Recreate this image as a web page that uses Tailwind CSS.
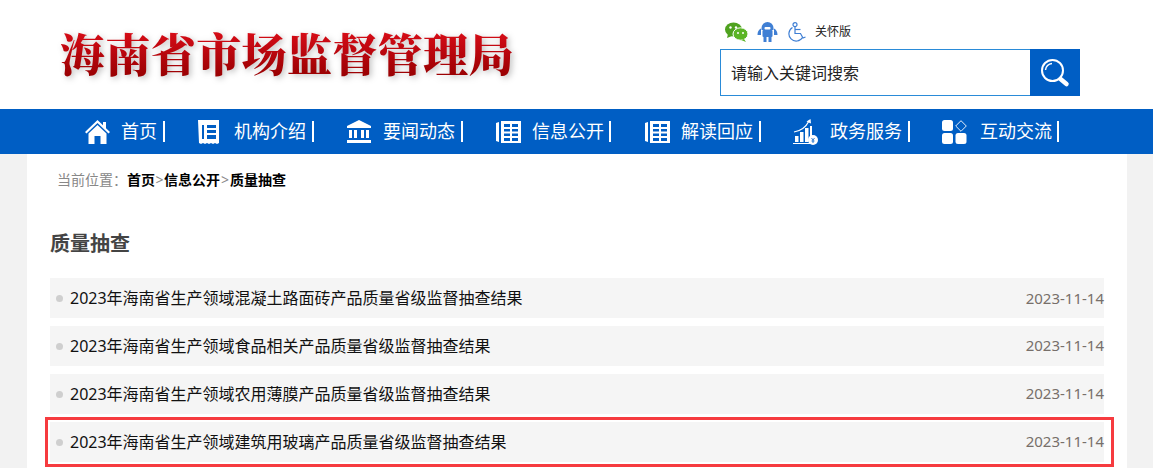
<!DOCTYPE html>
<html lang="zh-CN">
<head>
  <meta charset="UTF-8">
  <meta name="viewport" content="width=device-width, initial-scale=1.0">
  <title>质量抽查</title>
  <script src="https://cdn.jsdelivr.net/npm/@tailwindcss/browser@4"></script>
</head>
<body class="h-screen overflow-hidden bg-[#f2f2f2] font-['Noto_Sans','Noto_Sans_CJK_SC',sans-serif]">

<!-- header -->
<header class="h-[109px] bg-white flex justify-between">
  <div class="pl-[60px] pt-[20px]">
    <h1 class="font-['Noto_Serif_CJK_SC','Noto_Sans_CJK_SC',serif] text-[45px] leading-[66px] font-black tracking-[0.4px] whitespace-nowrap text-transparent bg-clip-text bg-gradient-to-b from-[#e8101c] to-[#8c0000] drop-shadow-[2px_2px_3px_rgba(0,0,0,0.25)]">海南省市场监督管理局</h1>
  </div>
  <div class="w-[433px] pt-[21px]">
    <div class="h-[22px] pl-[5px] flex items-center">
      <svg class="w-[23px] h-[20px]" viewBox="0 0 23 20">
        <ellipse cx="8.500" cy="7.500" rx="8.500" ry="7" fill="#4fa21f"/>
        <path d="M3 12l-1 4 5-2z" fill="#4fa21f"/>
        <ellipse cx="15.500" cy="12" rx="7.500" ry="6.200" fill="#5cb526" stroke="#fff" stroke-width="1"/>
        <path d="M19 17l2 3-5-2z" fill="#5cb526"/>
        <circle cx="5.500" cy="5.500" r="1.200" fill="#fff"/><circle cx="11" cy="5.500" r="1.200" fill="#fff"/>
        <circle cx="13" cy="11" r="1" fill="#fff"/><circle cx="18" cy="11" r="1" fill="#fff"/>
      </svg>
      <svg class="ml-[9px] w-[21px] h-[20px]" viewBox="0 0 21 20" fill="#3f7fd4">
        <path d="M4.500 6a6 6 0 0 1 12 0v2h-12z"/>
        <rect x="5.500" y="8" width="10" height="7" rx="1"/>
        <rect x="7.500" y="5" width="6" height="2.500" rx="1" fill="#fff"/>
        <path d="M4 6.500v6.500H0.500c0-3 1.200-5.500 3.500-6.500zM17 6.500v6.500h3.500c0-3-1.200-5.500-3.500-6.500z"/>
        <rect x="6.500" y="15" width="3" height="5"/><rect x="11.500" y="15" width="3" height="5"/>
      </svg>
      <svg class="ml-[9px] w-[20px] h-[20px]" viewBox="0 0 20 20" fill="none" stroke="#3f7fd4" stroke-width="1.200">
        <circle cx="8" cy="2.700" r="2"/>
        <path d="M8 4.700v6.800h5.500l2.500 4.500 2.500-1"/>
        <path d="M8 7.500h5.500"/>
        <path d="M5.500 5.500a7.300 7.300 0 1 0 10 10"/>
      </svg>
      <span class="ml-[8px] text-[12px] text-[#222]">关怀版</span>
    </div>
    <div class="mt-[6px] w-[360px] h-[47px] flex border border-[#2a8bd8] bg-white">
      <div class="flex-1 pl-[10px] text-[16px] leading-[46px] text-[#222]">请输入关键词搜索</div>
      <button class="w-[50px] -my-px -mr-px bg-[#005ec4] flex items-center justify-center">
        <svg class="w-[30px] h-[30px]" viewBox="0 0 30 30" fill="none" stroke="#fff">
          <circle cx="12.500" cy="12.500" r="10.500" stroke-width="2"/>
          <path d="M5.500 12a7 7 0 0 1 6.500-6.500" stroke-width="1.500"/>
          <path d="M20.500 21l6 5" stroke-width="4.500" stroke-linecap="round"/>
        </svg>
      </button>
    </div>
  </div>
</header>

<!-- nav -->
<nav class="h-[45px] bg-[#005ec4] flex items-center pl-[85px] text-white text-[18px] whitespace-nowrap">
  <a class="w-[113px] flex items-center">
    <svg class="w-[25px] h-[24px] mr-[11px]" viewBox="0 0 25 24" fill="#fff">
      <path d="M12.500 0L0 12l1.500 1.500L12.500 3l11 10.500L25 12l-4-3.800V2h-3v3.300z"/>
      <path d="M12.500 5L3.500 13.500V24h6v-8h6v8h6V13.500z"/>
    </svg>
    <span>首页</span><i class="ml-[6px] w-[2px] h-[21px] bg-white"></i>
  </a>
  <a class="w-[149px] flex items-center">
    <svg class="w-[21px] h-[24px] mr-[15px]" viewBox="0 0 21 24" fill="#fff">
      <path fill-rule="evenodd" d="M0 0h21v23l-2 1-2-1-2 1-2-1-2 1-2-1-2 1-2-1-2 1-2-1zM4 5v14h2V5zM9 5v3h9V5zM9 10v3h9v-3zM9 15v4h9v-4z"/>
    </svg>
    <span>机构介绍</span><i class="ml-[6px] w-[2px] h-[21px] bg-white"></i>
  </a>
  <a class="w-[149px] flex items-center">
    <svg class="w-[24px] h-[24px] mr-[12px]" viewBox="0 0 24 24" fill="#fff">
      <path d="M12 0l12 6v2H0V6z"/>
      <rect x="2" y="10" width="3" height="8"/><rect x="7" y="10" width="3" height="8"/><rect x="14" y="10" width="3" height="8"/><rect x="19" y="10" width="3" height="8"/>
      <rect x="0" y="20" width="24" height="3"/>
    </svg>
    <span>要闻动态</span><i class="ml-[6px] w-[2px] h-[21px] bg-white"></i>
  </a>
  <a class="w-[149px] flex items-center">
    <svg class="w-[25px] h-[24px] mr-[11px]" viewBox="0 0 25 24" fill="#fff">
      <path d="M0 3l3-1v20l-3-1z"/>
      <path fill-rule="evenodd" d="M5 1h20v22H5zM8 4v3h6V4zM16 4v3h6V4zM8 9v2.500h6V9zM16 9v2.500h6V9zM8 13.500V16h6v-2.500zM16 13.500V16h6v-2.500zM8 18v3h6v-3zM16 18v3h6v-3z"/>
    </svg>
    <span>信息公开</span><i class="ml-[5px] w-[2px] h-[21px] bg-white"></i>
  </a>
  <a class="w-[148px] flex items-center">
    <svg class="w-[25px] h-[24px] mr-[11px]" viewBox="0 0 25 24" fill="#fff">
      <path d="M0 3l3-1v20l-3-1z"/>
      <path fill-rule="evenodd" d="M5 1h20v22H5zM8 4v3h6V4zM16 4v3h6V4zM8 9v2.500h6V9zM16 9v2.500h6V9zM8 13.500V16h6v-2.500zM16 13.500V16h6v-2.500zM8 18v3h6v-3zM16 18v3h6v-3z"/>
    </svg>
    <span>解读回应</span><i class="ml-[6px] w-[2px] h-[21px] bg-white"></i>
  </a>
  <a class="w-[149px] flex items-center">
    <svg class="w-[25px] h-[26px] mr-[12px]" viewBox="0 0 25 26" fill="#fff">
      <path d="M1 13C7 12 13 8 16 2" fill="none" stroke="#fff" stroke-width="1.200"/>
      <path d="M13.500 2.500L17.500 0l.5 4.500z"/>
      <rect x="2" y="17" width="3.500" height="6"/><rect x="7" y="13" width="3.500" height="10"/><rect x="12" y="9" width="3.500" height="14"/>
      <rect x="0" y="24" width="18" height="1"/>
      <rect x="17" y="7" width="2" height="11"/>
      <circle cx="20" cy="21" r="5"/>
      <path d="M18.500 19l1.500 2 1.500-2M20 21v3M18.500 22h3" fill="none" stroke="#005ec4" stroke-width="0.800"/>
    </svg>
    <span>政务服务</span><i class="ml-[6px] w-[2px] h-[21px] bg-white"></i>
  </a>
  <a class="flex items-center">
    <svg class="w-[25px] h-[24px] mr-[13px]" viewBox="0 0 25 24" fill="#fff">
      <rect x="0" y="0" width="11" height="11" rx="2.500"/>
      <rect x="0" y="13" width="11" height="11" rx="2.500"/>
      <rect x="13.500" y="13" width="11" height="11" rx="2.500"/>
      <path d="M19 0.700L24.300 6 19 11.300 13.700 6z" fill="none" stroke="#fff" stroke-width="0.900"/>
    </svg>
    <span>互动交流</span><i class="ml-[5px] w-[2px] h-[21px] bg-white"></i>
  </a>
</nav>

<!-- content -->
<main class="mx-[27px] w-[1100px] h-[320px] bg-white pl-[23px] pr-[23px]">
  <div class="pt-[16px] pl-[7px] text-[14px] leading-[20px] text-[#888] whitespace-nowrap">
    当前位置：<b class="font-bold text-black">首页</b><span class="px-[0.5px]">&gt;</span><b class="font-bold text-black">信息公开</b><span class="px-[1px]">&gt;</span><b class="font-bold text-black">质量抽查</b>
  </div>
  <h2 class="mt-[39px] text-[20px] leading-[30px] font-bold text-[#444]">质量抽查</h2>
  <ul class="mt-[19px] flex flex-col gap-[8px] text-[16px]">
    <li class="h-[40px] bg-[#f5f5f5] flex items-center pl-[6px]">
      <i class="w-[7px] h-[7px] rounded-full bg-[#cfcfcf] mr-[7px]"></i>
      <span class="flex-1 text-[#111]">2023年海南省生产领域混凝土路面砖产品质量省级监督抽查结果</span>
      <span class="text-[15px] text-[#776f6a]">2023-11-14</span>
    </li>
    <li class="h-[40px] bg-[#f5f5f5] flex items-center pl-[6px]">
      <i class="w-[7px] h-[7px] rounded-full bg-[#cfcfcf] mr-[7px]"></i>
      <span class="flex-1 text-[#111]">2023年海南省生产领域食品相关产品质量省级监督抽查结果</span>
      <span class="pb-[1px] text-[15px] text-[#776f6a]">2023-11-14</span>
    </li>
    <li class="h-[40px] bg-[#f5f5f5] flex items-center pl-[6px]">
      <i class="w-[7px] h-[7px] rounded-full bg-[#cfcfcf] mr-[7px]"></i>
      <span class="flex-1 text-[#111]">2023年海南省生产领域农用薄膜产品质量省级监督抽查结果</span>
      <span class="pb-[1px] text-[15px] text-[#776f6a]">2023-11-14</span>
    </li>
    <li class="relative h-[40px] bg-[#f5f5f5] flex items-center pl-[6px]">
      <i class="w-[7px] h-[7px] rounded-full bg-[#cfcfcf] mr-[7px]"></i>
      <span class="flex-1 text-[#111]">2023年海南省生产领域建筑用玻璃产品质量省级监督抽查结果</span>
      <span class="pb-[1px] text-[15px] text-[#776f6a]">2023-11-14</span>
      <div class="absolute -left-[5px] -right-[10px] -top-[5px] -bottom-[5px] border-[3px] border-[#f63b3f]"></div>
    </li>
  </ul>
</main>

</body>
</html>
